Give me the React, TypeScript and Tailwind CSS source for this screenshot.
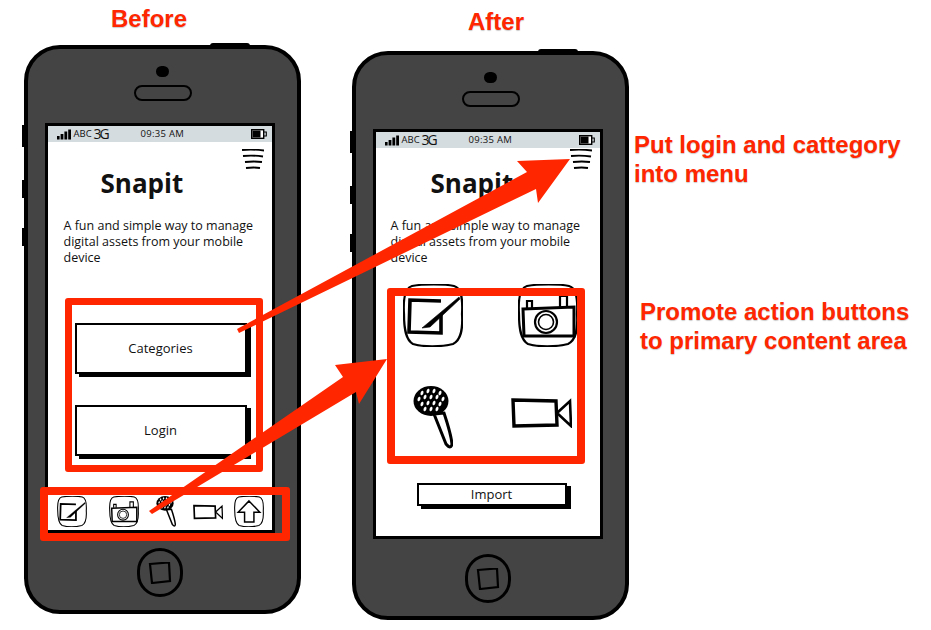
import React from "react";

const Outline = () => (
  <path d="M9 2 C20 0 42 0 51 2 C58 4 60 13 59 30 C60 46 58 56 50 60 C38 63 20 63 10 60 C3 56 1 46 1 30 C0 14 2 4 9 2Z" fill="#fff" stroke="#000" strokeWidth="2.2" />
);

const ComposeIcon = ({ className }: { className: string }) => (
  <svg viewBox="0 0 60 63" className={className}>
    <Outline />
    <path d="M38 17 L7 16 L6 48 L38 49 L38 30" fill="none" stroke="#000" strokeWidth="3.6" />
    <path d="M56 13 L25 39 L19 44 L27 43 L57 15Z" fill="#000" stroke="#000" strokeWidth="0.6" />
  </svg>
);

const CameraIcon = ({ className }: { className: string }) => (
  <svg viewBox="0 0 60 63" className={className}>
    <Outline />
    <path d="M5 25 L56 23 L56 52 L6 52Z" fill="#fff" stroke="#000" strokeWidth="3" />
    <path d="M9 24 V17 H14 V24 M42 23 V12 H49 V23" fill="none" stroke="#000" strokeWidth="2.2" />
    <circle cx="28" cy="38" r="11" fill="#fff" stroke="#000" strokeWidth="2.2" />
    <circle cx="28" cy="38" r="7.5" fill="#fff" stroke="#000" strokeWidth="1.6" />
  </svg>
);

const MicIcon = ({ className }: { className: string }) => {
  const dots: [number, number][] = [
    [9, 7], [15, 5], [21, 5], [27, 7], [6, 13], [12, 11], [18, 11], [24, 11], [30, 13],
    [9, 18], [15, 17], [21, 17], [27, 18], [12, 23], [18, 23], [24, 23],
  ];
  return (
    <svg viewBox="0 0 40 63" className={className}>
      <path d="M21 28 L33 58 Q38 64 39 58 Q38 48 31 27Z" fill="#fff" stroke="#000" strokeWidth="3" />
      <ellipse cx="18" cy="15" rx="17.5" ry="15" fill="#000" />
      {dots.map(([x, y], i) => (
        <ellipse key={i} cx={x} cy={y} rx="1.4" ry="2.3" fill="#fff" transform={`rotate(20 ${x} ${y})`} />
      ))}
    </svg>
  );
};

const VideoIcon = ({ className }: { className: string }) => (
  <svg viewBox="0 0 61 30" className={className}>
    <path d="M2 2 L45 3 L46 27 L3 28Z" fill="#fff" stroke="#000" strokeWidth="3.4" />
    <path d="M46 15 L59 3 L60 28Z" fill="#fff" stroke="#000" strokeWidth="2.6" />
  </svg>
);

const UploadIcon = ({ className }: { className: string }) => (
  <svg viewBox="0 0 60 63" className={className}>
    <Outline />
    <path d="M30 10 L52 33 L40 33 L40 53 L21 53 L21 33 L8 33Z" fill="#fff" stroke="#000" strokeWidth="3" />
  </svg>
);

const Signal = () => (
  <svg viewBox="0 0 14 10" className="w-[14px] h-[11px] shrink-0">
    <path d="M0 6.5h2.6V10H0zM3.6 4.5h2.8V10H3.6zM7.4 2h2.8v8H7.4zM11.2 0H14v10h-2.8z" fill="#000" />
  </svg>
);

const Battery = () => (
  <svg viewBox="0 0 16 10" className="w-[16px] h-[10px] shrink-0">
    <rect x="0.7" y="0.7" width="12" height="8.6" fill="#fff" stroke="#000" strokeWidth="1.4" />
    <rect x="1.5" y="1.5" width="8" height="7" fill="#000" />
    <path d="M12.7 3 H15.3 V7 H12.7" fill="none" stroke="#000" strokeWidth="1.1" />
  </svg>
);

const Hamburger = () => (
  <svg viewBox="0 0 22 20" className="w-[22px] h-[20px]">
    <path d="M0 1 Q11 0 22 1.5M1 7 Q11 6 21 7.5M3 13 Q12 12 20 13M4 19 Q12 18 18 19" fill="none" stroke="#000" strokeWidth="1.8" />
  </svg>
);

const WireButton = ({ label, className }: { label: string; className: string }) => (
  <div className={`flex items-center justify-center border-2 border-black bg-white shadow-[4px_3px_0_#000] text-[13px] text-[#111] ${className}`}>
    {label}
  </div>
);

const StatusBar = () => (
  <div className="flex items-center h-4 bg-[#d5dcdf] pl-[9px] pr-[5px] text-[#111] shrink-0">
    <Signal />
    <span className="ml-[3px] w-[20px] text-[9.5px]">ABC</span>
    <span className="w-[17px] text-[14px] leading-none tracking-[-2px]">3G</span>
    <span className="ml-[30px] text-[9.5px] tracking-[0.3px]">09:35 AM</span>
    <span className="ml-auto flex">
      <Battery />
    </span>
  </div>
);

const Description = ({ className }: { className: string }) => (
  <p className={`text-[12.5px] leading-4 text-[#111] whitespace-nowrap ${className}`}>
    A fun and simple way to manage
    <br />
    digital assets from your mobile
    <br />
    device
  </p>
);

const Phone = ({ children, headTop }: { children: React.ReactNode; headTop: string }) => (
  <div className="relative w-[277px] h-[569px] rounded-[36px] border-4 border-black bg-[#444444] pt-[17px] flex flex-col items-center">
    <div className="absolute top-[-6px] left-[182px] w-[40px] h-[4px] rounded-t-[3px] bg-black" />
    <div className="absolute left-[-6px] top-[76px] w-[3px] h-[22px] bg-black" />
    <div className="absolute left-[-6px] top-[131px] w-[3px] h-[18px] bg-black" />
    <div className="absolute left-[-6px] top-[179px] w-[3px] h-[18px] bg-black" />
    <div className="w-[13px] h-[11px] rounded-full bg-black" />
    <div className="mt-[8px] w-[58px] h-[16px] rounded-full border-[2.5px] border-black" />
    <div className="mt-[22px] ml-[-6px] w-[230px] h-[410px] border-[3px] border-black bg-white flex flex-col overflow-hidden">
      <StatusBar />
      <div className={`flex justify-end pr-[8px] shrink-0 ${headTop}`}>
        <Hamburger />
      </div>
      {children}
    </div>
    <div className="mt-[15px] ml-[-6px] w-[46px] h-[49px] rounded-full border-[3px] border-black flex items-center justify-center">
      <svg viewBox="0 0 24 22" className="w-[24px] h-[22px]">
        <path d="M2 2 L21 0.5 L22 19 L4 21Z" fill="none" stroke="#000" strokeWidth="2.2" />
      </svg>
    </div>
  </div>
);

const Title = ({ className }: { className: string }) => (
  <h1 className={`h-[28px] leading-[28px] text-[26px] font-bold text-[#111] shrink-0 ${className}`}>Snapit</h1>
);

const Label = ({ children, className }: { children: React.ReactNode; className: string }) => (
  <div className={`h-[28px] leading-[28px] text-[24px] font-bold text-[#ff2600] [font-family:'Liberation_Sans',Arial,sans-serif] [text-shadow:0_1px_1px_#cccccc] ${className}`}>
    {children}
  </div>
);

export default function App() {
  return (
    <div className="relative w-[931px] h-[630px] bg-white overflow-hidden flex font-['Open_Sans','Noto_Sans',sans-serif]">
      <div className="ml-[24px] w-[277px]">
        <Label className="mt-[5px] ml-[87px]">Before</Label>
        <div className="mt-[12px]">
          <Phone headTop="mt-[7px]">
            <Title className="ml-[53px]" />
            <Description className="mt-[21px] ml-[16px]" />
            <WireButton label="Categories" className="mt-[57px] ml-[27px] w-[172px] h-[51px] shrink-0" />
            <WireButton label="Login" className="mt-[31px] ml-[27px] w-[172px] h-[51px] shrink-0" />
            <div className="mt-[40px] ml-[9px] flex items-center">
              <ComposeIcon className="w-[30px] h-[31px]" />
              <CameraIcon className="ml-[22px] w-[30px] h-[31px]" />
              <MicIcon className="ml-[17px] w-[20px] h-[31px]" />
              <VideoIcon className="ml-[17px] w-[30px] h-[16px]" />
              <UploadIcon className="ml-[11px] w-[30px] h-[31px]" />
            </div>
          </Phone>
        </div>
      </div>

      <div className="ml-[51px] w-[277px]">
        <Label className="mt-[8px] ml-[116px]">After</Label>
        <div className="mt-[15px]">
          <Phone headTop="mt-[1px]">
            <Title className="ml-[55px]" />
            <Description className="mt-[21px] ml-[15px]" />
            <div className="mt-[18px] ml-[27px] flex">
              <ComposeIcon className="w-[60px] h-[63px]" />
              <CameraIcon className="ml-[55px] w-[60px] h-[63px]" />
            </div>
            <div className="mt-[39px] ml-[37px] flex items-start">
              <MicIcon className="w-[40px] h-[63px]" />
              <VideoIcon className="mt-[12px] ml-[58px] w-[61px] h-[30px]" />
            </div>
            <WireButton label="Import" className="mt-[34px] ml-[41px] w-[150px] h-[23px] shrink-0" />
          </Phone>
        </div>
      </div>

      <div className="flex flex-col">
        <Label className="mt-[130px] ml-[5px] h-[29px] leading-[29px] whitespace-nowrap">Put login and cattegory</Label>
        <Label className="ml-[5px] h-[29px] leading-[29px] whitespace-nowrap">into menu</Label>
        <Label className="mt-[109px] ml-[11px] h-[29px] leading-[29px] whitespace-nowrap">Promote action buttons</Label>
        <Label className="ml-[11px] h-[29px] leading-[29px] whitespace-nowrap">to primary content area</Label>
      </div>

      {/* Annotation overlay */}
      <div className="absolute left-[65px] top-[298px] w-[198px] h-[174px] border-[7px] border-[#ff2600] rounded-[3px]" />
      <div className="absolute left-[40px] top-[487px] w-[250px] h-[54px] border-[8px] border-[#ff2600] rounded-[3px]" />
      <div className="absolute left-[387px] top-[288px] w-[198px] h-[176px] border-[8px] border-[#ff2600] rounded-[3px]" />
      <svg className="absolute left-0 top-0 w-[931px] h-[630px] pointer-events-none" viewBox="0 0 931 630">
        <polygon points="237,329 527,172 517,161 570,159 538,203 536,189 239,333" fill="#ff2600" />
        <polygon points="149,511 343,377 335,365 387,359 359,404 356,392 152,514" fill="#ff2600" />
      </svg>
    </div>
  );
}
